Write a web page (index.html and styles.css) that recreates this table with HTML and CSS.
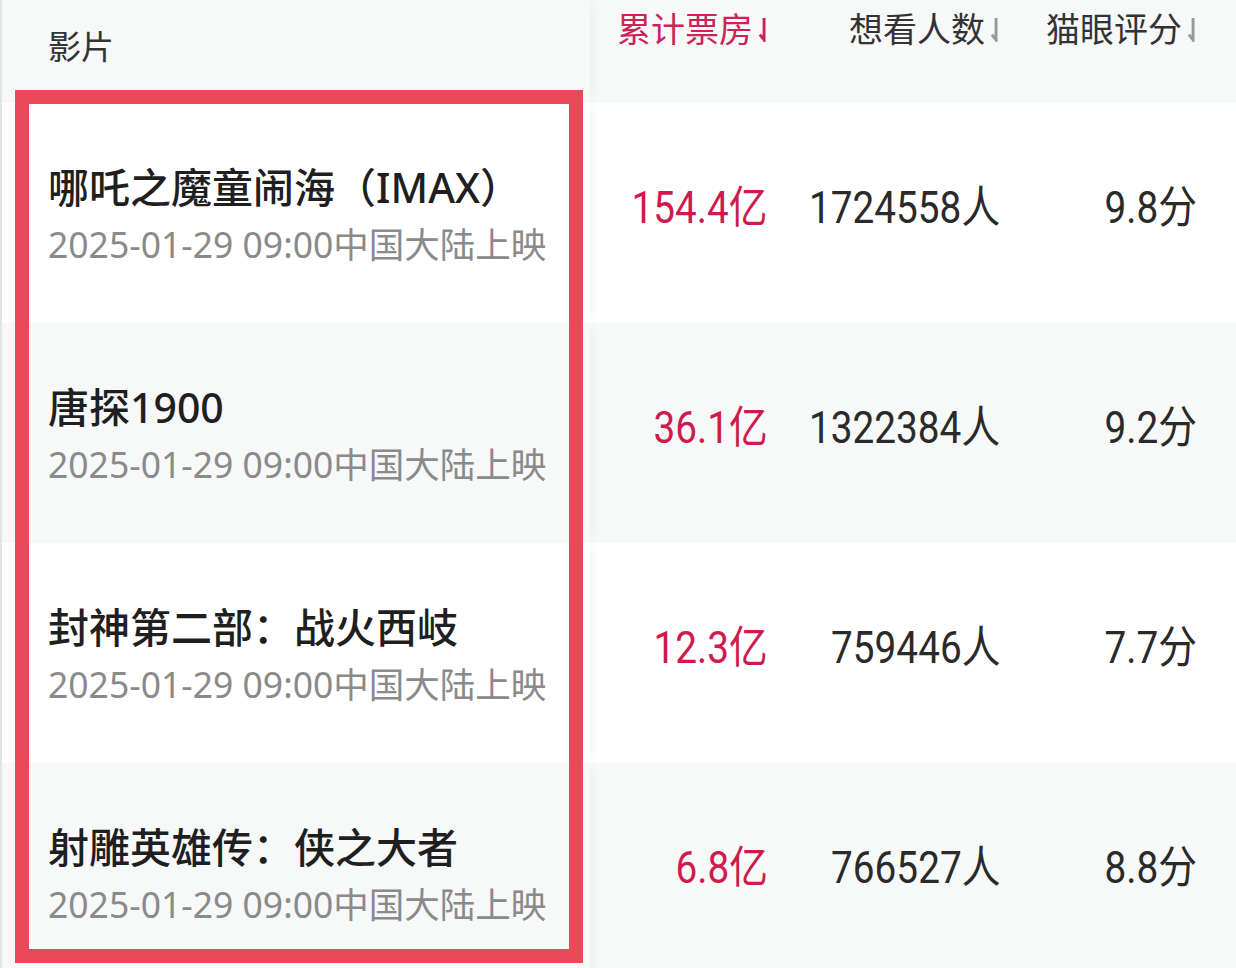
FILE: index.html
```html
<!DOCTYPE html>
<html lang="zh-CN">
<head>
    <meta charset="UTF-8">
    <meta name="viewport" content="width=device-width, initial-scale=1">
    <title>影片票房</title>
    <link rel="stylesheet" href="styles.css">
</head>
<body>
<div class="board">
    <div class="head">
        <div class="film-col head-film">影片</div>
        <div class="sort-col active">累计票房<svg class="sort-icon" viewBox="0 0 10 24"><path d="M6.5 1V22L2.5 17"/></svg></div>
        <div class="sort-col">想看人数<svg class="sort-icon" viewBox="0 0 10 24"><path d="M6.5 1V22L2.5 17"/></svg></div>
        <div class="sort-col">猫眼评分<svg class="sort-icon" viewBox="0 0 10 24"><path d="M6.5 1V22L2.5 17"/></svg></div>
    </div>

    <div class="row">
        <div class="film-col">
            <div class="film-name">哪吒之魔童闹海（IMAX）</div>
            <div class="film-date">2025-01-29 09:00中国大陆上映</div>
        </div>
        <div class="num box"><span>154.4亿</span></div>
        <div class="num"><span>1724558人</span></div>
        <div class="num"><span>9.8分</span></div>
    </div>

    <div class="row">
        <div class="film-col">
            <div class="film-name">唐探1900</div>
            <div class="film-date">2025-01-29 09:00中国大陆上映</div>
        </div>
        <div class="num box"><span>36.1亿</span></div>
        <div class="num"><span>1322384人</span></div>
        <div class="num"><span>9.2分</span></div>
    </div>

    <div class="row">
        <div class="film-col">
            <div class="film-name">封神第二部：战火西岐</div>
            <div class="film-date">2025-01-29 09:00中国大陆上映</div>
        </div>
        <div class="num box"><span>12.3亿</span></div>
        <div class="num"><span>759446人</span></div>
        <div class="num"><span>7.7分</span></div>
    </div>

    <div class="row">
        <div class="film-col">
            <div class="film-name">射雕英雄传：侠之大者</div>
            <div class="film-date">2025-01-29 09:00中国大陆上映</div>
        </div>
        <div class="num box"><span>6.8亿</span></div>
        <div class="num"><span>766527人</span></div>
        <div class="num"><span>8.8分</span></div>
    </div>

    <div class="mark"></div>
</div>
</body>
</html>
```

FILE: styles.css
```css
body {
    margin: 0;
    background: #fff;
    font-family: "Noto Sans", "Noto Sans CJK SC", sans-serif;
    color: #222;
}

.board {
    position: relative;
    width: 1236px;
    height: 968px;
    overflow: hidden;
    border-left: 2px solid #e2e4e4;
    box-sizing: border-box;
}

.head,
.row {
    display: grid;
    grid-template-columns: 588px 178px 232px 197px;
}

.head {
    height: 103px;
    background: #f7f8f8;
}

.row {
    height: 220px;
}

.row:nth-of-type(odd) {
    background: #f7f8f8;
}

.film-col {
    padding-left: 46px;
    box-shadow: 6px 0 10px -4px rgba(0, 0, 0, 0.05);
}

.head-film {
    padding-top: 24px;
    font-size: 33px;
    line-height: 46px;
    color: #333;
}

.sort-col {
    display: flex;
    justify-content: flex-end;
    align-items: center;
    height: 54px;
    font-size: 34px;
    color: #333;
    font-family: "Noto Sans CJK SC", sans-serif;
}

.sort-col.active {
    color: #cc2456;
}

.sort-icon {
    width: 11px;
    height: 25px;
    margin-left: 4px;
    margin-top: 4px;
    fill: none;
    stroke: #999;
    stroke-width: 2.8;
}

.sort-col.active .sort-icon {
    stroke: #cc2456;
}

.film-name {
    padding-top: 59px;
    font-size: 41px;
    line-height: 50px;
    font-weight: 500;
    color: #1f1f1f;
}

.film-date {
    margin-top: 8px;
    font-size: 35.5px;
    line-height: 48px;
    color: #8a8a8a;
}

.num {
    text-align: right;
    padding-top: 80px;
    font-family: "Roboto", "Noto Sans CJK SC", sans-serif;
    font-size: 44px;
    line-height: 50px;
    color: #2a2a2a;
}

.num span {
    display: inline-block;
    transform: scaleX(0.88);
    transform-origin: right center;
}

.num.box {
    color: #cf1a4e;
}

.mark {
    position: absolute;
    left: 13px;
    top: 90px;
    width: 568px;
    height: 873px;
    border: 14px solid #e84a5a;
    box-sizing: border-box;
    pointer-events: none;
}
```
